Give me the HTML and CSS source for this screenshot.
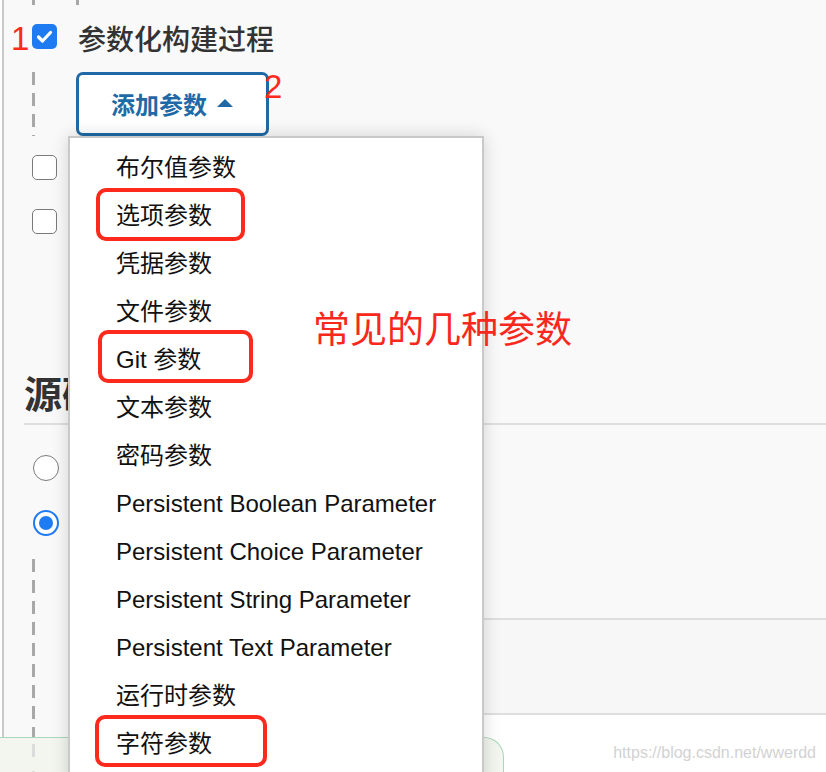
FILE: index.html
```html
<!DOCTYPE html>
<html>
<head>
<meta charset="utf-8">
<title>参数化构建过程</title>
<link rel="stylesheet" href="styles.css">
</head>
<body>
<div class="page">
  <div class="panel">
    <div class="top-dashes">
      <span class="dash-stub"></span>
      <span class="dash-stub second"></span>
    </div>

    <div class="option-row first">
      <span class="checkbox checked">
        <svg viewBox="0 0 25 25" width="25" height="25"><path d="M6.5 13 L10.5 17 L18.5 8.5" fill="none" stroke="#fff" stroke-width="3.2" stroke-linecap="round" stroke-linejoin="round"/></svg>
      </span>
      <span class="option-title">参数化构建过程</span>
    </div>

    <div class="nested">
      <div class="dash-col"></div>
      <button class="add-param" type="button">添加参数<span class="caret"></span></button>
    </div>

    <div class="option-row second"><span class="checkbox"></span></div>
    <div class="option-row third"><span class="checkbox"></span></div>

    <h2 class="section-title"><span class="section-text">源码管理</span></h2>

    <div class="radio-row"><span class="radio"></span></div>
    <div class="radio-row"><span class="radio checked"></span></div>

    <div class="lower">
      <div class="dash-col"></div>
      <div class="scm-area">
        <div class="scm-box"></div>
        <div class="scm-gap"></div>
      </div>
    </div>
  </div>

  <div class="footer">
    <div class="green-box"><div class="dash-col faint"></div></div>
    <div class="watermark">https://blog.csdn.net/wwerdd</div>
  </div>

  <!-- opened menu of the add button -->
  <ul class="dropdown">
    <li>布尔值参数</li>
    <li>选项参数</li>
    <li>凭据参数</li>
    <li>文件参数</li>
    <li>Git 参数</li>
    <li>文本参数</li>
    <li>密码参数</li>
    <li>Persistent Boolean Parameter</li>
    <li>Persistent Choice Parameter</li>
    <li>Persistent String Parameter</li>
    <li>Persistent Text Parameter</li>
    <li>运行时参数</li>
    <li>字符参数</li>
  </ul>

  <!-- red annotations drawn on top of the screenshot -->
  <span class="mark mark-1">1</span>
  <span class="mark mark-2">2</span>
  <span class="hl hl-choice"></span>
  <span class="hl hl-git"></span>
  <span class="hl hl-string"></span>
  <span class="note">常见的几种参数</span>
</div>
</body>
</html>
```

FILE: styles.css
```css
body {
    margin: 0;
    padding: 0;
    background-color: #fff;
    font-family: "Liberation Sans", "Noto Sans CJK SC", sans-serif;
}

.page {
    position: relative;
    width: 826px;
    height: 772px;
    overflow: hidden;
}

.panel {
    margin-left: 2px;
    height: 737px;
    border-left: 2px solid #c9c9c9;
    background-color: #f9f9f9;
    display: flex;
    flex-direction: column;
}

.top-dashes {
    height: 5px;
    display: flex;
    padding-left: 28px;
}

.dash-stub {
    width: 3px;
    height: 5px;
    background-color: #a8a8a8;
}

.dash-stub.second {
    margin-left: 41px;
}

.dash-col {
    width: 3px;
    align-self: stretch;
    background: repeating-linear-gradient(to bottom, #a8a8a8 0 13px, transparent 13px 21px);
}

.option-row {
    display: flex;
    align-items: center;
    height: 25px;
    padding-left: 28px;
}

.option-row.first { margin-top: 19px; }
.option-row.second { margin-top: 19px; }
.option-row.third { margin-top: 29px; }

.checkbox {
    width: 25px;
    height: 25px;
    box-sizing: border-box;
    border: 1.5px solid #7a7a7a;
    border-radius: 5px;
    background-color: #fff;
    display: flex;
}

.checkbox.checked {
    border: none;
    background-color: #1f7bf2;
}

.option-title {
    margin-left: 21px;
    margin-top: 8px;
    font-size: 28px;
    font-weight: 500;
    color: #333;
    line-height: 32px;
}

.nested {
    display: flex;
    margin-top: 23px;
    margin-left: 28px;
}

.add-param {
    margin-left: 41px;
    width: 193px;
    height: 64px;
    box-sizing: border-box;
    border: 3px solid #1f6aa6;
    border-radius: 7px;
    background-color: #fff;
    color: #1f6aa6;
    font-family: inherit;
    font-size: 24px;
    font-weight: bold;
    display: flex;
    align-items: center;
    padding: 0 0 2px 32px;
}

.caret {
    margin-left: 10px;
    width: 0;
    height: 0;
    border-left: 8px solid transparent;
    border-right: 8px solid transparent;
    border-bottom: 8px solid #1f6aa6;
}

.section-title {
    margin: 138px 0 0 20px;
    padding-bottom: 5px;
    border-bottom: 2px solid #dedede;
    font-size: 38px;
    line-height: 46px;
    font-weight: bold;
    color: #333;
}

/* the menu covers the rest of the heading */
.section-text {
    display: block;
    width: 44px;
    overflow: hidden;
    white-space: nowrap;
}

.radio-row {
    display: flex;
    padding-left: 29px;
    margin-top: 29px;
}

.section-title + .radio-row {
    margin-top: 30px;
}

.radio {
    width: 26px;
    height: 26px;
    box-sizing: border-box;
    border: 1.5px solid #7a7a7a;
    border-radius: 50%;
    background-color: #fff;
    display: flex;
    align-items: center;
    justify-content: center;
}

.radio.checked {
    border: 2.5px solid #1f7bf2;
}

.radio.checked::after {
    content: "";
    width: 14px;
    height: 14px;
    border-radius: 50%;
    background-color: #1f7bf2;
}

.lower {
    flex: 1;
    display: flex;
    margin-top: 23px;
    padding-left: 28px;
}

.scm-area {
    flex: 1;
    margin-left: 60px;
    padding-top: 59px;
    display: flex;
    flex-direction: column;
}

.scm-box {
    height: 93px;
    border-top: 2px solid #dedede;
    border-bottom: 2px solid #dedede;
    background-color: #f7f7f7;
}

.scm-gap {
    flex: 1;
    background-color: #fff;
}

.footer {
    height: 35px;
    display: flex;
}

.green-box {
    width: 504px;
    height: 60px;
    border-top: 1px solid #abd6bd;
    border-right: 1px solid #abd6bd;
    border-top-right-radius: 20px;
    background-color: #f3f6ef;
    display: flex;
    padding-left: 32px;
    box-sizing: border-box;
}

.dash-col.faint {
    background: repeating-linear-gradient(to bottom, transparent 0 6px, #dcdcdc 6px 19px, transparent 19px 27px);
}

.watermark {
    margin-left: auto;
    margin-right: 10px;
    padding-top: 6px;
    font-size: 16px;
    line-height: 20px;
    color: #d2d2d2;
}

.dropdown {
    position: absolute;
    left: 68px;
    top: 136px;
    width: 416px;
    height: 680px;
    box-sizing: border-box;
    margin: 0;
    padding: 6px 0 0 0;
    list-style: none;
    background-color: #fff;
    border: 2px solid #c9c9c9;
    box-shadow: 0 0 16px rgba(0,0,0,0.16);
}

.dropdown li {
    height: 48px;
    line-height: 48px;
    padding-left: 46px;
    font-size: 24px;
    color: #111;
    white-space: nowrap;
}

.mark {
    position: absolute;
    font-size: 33px;
    line-height: 33px;
    color: #fc2a1c;
}

.mark-1 { left: 11px; top: 22px; }
.mark-2 { left: 264px; top: 70px; }

.hl {
    position: absolute;
    box-sizing: border-box;
    border: 4px solid #fc2a1c;
    border-radius: 10px;
}

.hl-choice { left: 96px; top: 188px; width: 149px; height: 53px; }
.hl-git { left: 98px; top: 330px; width: 155px; height: 53px; }
.hl-string { left: 95px; top: 715px; width: 172px; height: 52px; }

.note {
    position: absolute;
    left: 313px;
    top: 312px;
    font-size: 37px;
    line-height: 37px;
    color: #f8281d;
    white-space: nowrap;
}
```
